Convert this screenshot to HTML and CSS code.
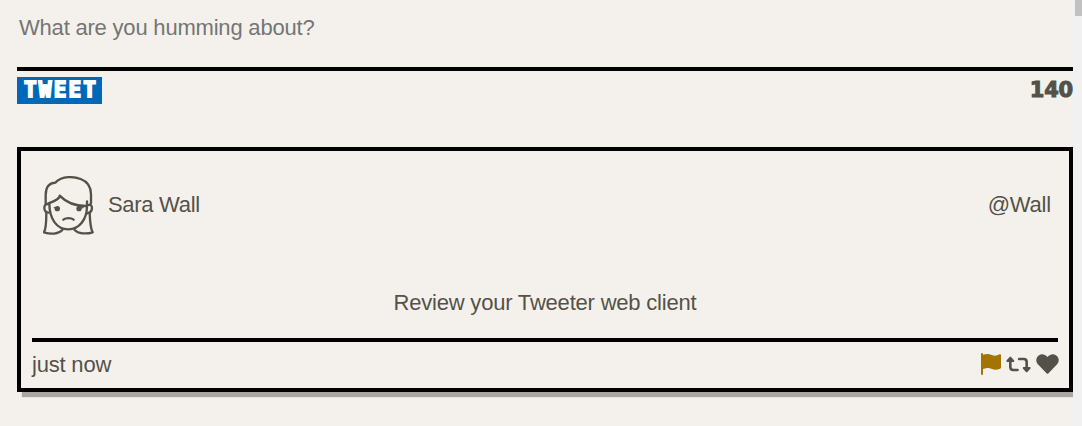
FILE: index.html
```html
<!DOCTYPE html>
<html lang="en">
<head>
<meta charset="utf-8">
<title>Tweeter</title>
<link rel="stylesheet" href="styles.css">
</head>
<body>
<main class="feed">
  <form class="composer">
    <textarea class="composer-input" placeholder="What are you humming about?"></textarea>
    <div class="composer-actions">
      <button class="tweet-button" type="button"><span>TWEET</span></button>
      <output class="counter">140</output>
    </div>
  </form>
  <article class="tweet">
    <header class="tweet-header">
      <svg class="avatar" viewBox="0 0 156 180" fill="none" stroke="#545149" stroke-width="7" stroke-linejoin="round" stroke-linecap="round">
        <path d="M8 82V58C8 35 17 21 37 20C58-2 94 2 113 9C137 18 144 36 144 55V82"/>
        <path d="M17 82C40 74 51 65 50 59C72 82 101 91 132 90V76"/>
        <path d="M19 82C19 130 42 160 76 160C110 160 132 129 132 90"/>
        <path d="M15 84C0 82 0 109 17 110M136 87C151 82 151 109 133 112"/>
        <path d="M10 110C10 138 9 158 3 169C24 176 47 174 58 162M140 111C141 138 142 157 149 169C130 175 105 173 95 162"/>
        <path d="M61 131C69 125 84 125 92 131"/>
        <path d="M34 95L47 97M120 95L107 97" stroke-width="4"/>
        <circle cx="43" cy="98" r="8" fill="#545149" stroke="none"/>
        <circle cx="108" cy="98" r="8" fill="#545149" stroke="none"/>
      </svg>
      <span class="name">Sara Wall</span>
      <span class="handle">@Wall</span>
    </header>
    <p class="tweet-text">Review your Tweeter web client</p>
    <footer class="tweet-footer">
      <span>just now</span>
      <span class="icons">
        <svg class="icon-flag" viewBox="0 0 60 66"><path d="M3 3V63" fill="none" stroke="#a37400" stroke-width="6" stroke-linecap="round"/><path fill="#a37400" d="M4 6C16 2 24 2 32 6C42 11 49 7 56 4Q60 3 60 7V44Q60 46 57 47C48 51 40 51 31 47C22 43 14 45 4 49Z"/></svg>
        <svg class="icon-retweet" viewBox="0 0 76 52" fill="none" stroke="#545149" stroke-width="8" stroke-linecap="round" stroke-linejoin="round"><path d="M13 12V34Q13 43 22 43H35M40 9H54Q63 9 63 18V39"/><path d="M4 15L13 5L22 15ZM54 37L63 47L72 37Z" fill="#545149" stroke-width="6"/></svg>
        <svg class="icon-heart" viewBox="0 0 68 60"><path fill="#545149" d="M34 9C45-4 60-1 66 11C70 21 66 28 60 34L37 58Q34 61 31 58L8 34C2 28-2 21 2 11C8-1 23-4 34 9Z"/></svg>
      </span>
    </footer>
  </article>
</main>
<div class="scroll-track"><div class="scroll-thumb"></div></div>
</body>
</html>
```
FILE: styles.css
```css
* { box-sizing: border-box; }
body {
  display: flex;
  height: 426px;
  margin: 0;
  overflow: hidden;
  background: #f4f1ec;
  color: #545149;
  font: 22px/26px "Liberation Sans", Arial, sans-serif;
  letter-spacing: -0.2px;
}
.feed { width: 1073px; padding-left: 17px; overflow: hidden; }
.composer { height: 147px; padding-top: 13px; }
.composer-input {
  display: block;
  width: 100%;
  height: 58px;
  padding: 2px;
  border: 0;
  border-bottom: 4px solid #000;
  background: transparent;
  font: inherit;
  letter-spacing: inherit;
  resize: none;
  outline: 0;
}
.composer-input::placeholder { color: #757575; }
.composer-actions { display: flex; justify-content: space-between; padding-top: 6px; }
.tweet-button {
  width: 85px;
  height: 27px;
  padding: 0 0 0 7px;
  border: 0;
  background: #0068b8;
  color: #fff;
  font: bold 21px/26px "DejaVu Sans Mono", monospace;
  letter-spacing: 2.2px;
  display: flex;
  -webkit-text-stroke: 1.8px #fff;
}
.counter {
  font: bold 21px/26px "DejaVu Sans", sans-serif;
  letter-spacing: -0.2px;
  -webkit-text-stroke: 1px #545149;
}
.tweet {
  height: 245px;
  padding: 25px 11px 0;
  border: 4px solid #000;
  box-shadow: 5px 5px 1px #aaa7a3;
}
.tweet-header { display: flex; height: 60px; padding: 0 7px 0 11px; }
.avatar { width: 52px; height: 60px; }
.name { margin: 16px 0 0 13px; letter-spacing: -0.3px; }
.handle { margin: 16px 0 0 auto; }
.tweet-text {
  height: 106px;
  margin: 0;
  padding-top: 54px;
  border-bottom: 4px solid #000;
  text-align: center;
}
.tweet-footer { display: flex; justify-content: space-between; padding-top: 10px; }
.icons { display: flex; align-items: flex-start; margin-right: -1px; }
.icon-flag { width: 20px; height: 22px; margin-top: 1px; }
.icon-retweet { width: 25px; height: 17px; margin: 4px 5px 0; }
.icon-heart { width: 23px; height: 20px; margin-top: 2px; }
.scroll-track { width: 9px; padding-left: 2px; background: #f1f1f1; }
.scroll-thumb { height: 16px; background: #c1c1c1; }
```
